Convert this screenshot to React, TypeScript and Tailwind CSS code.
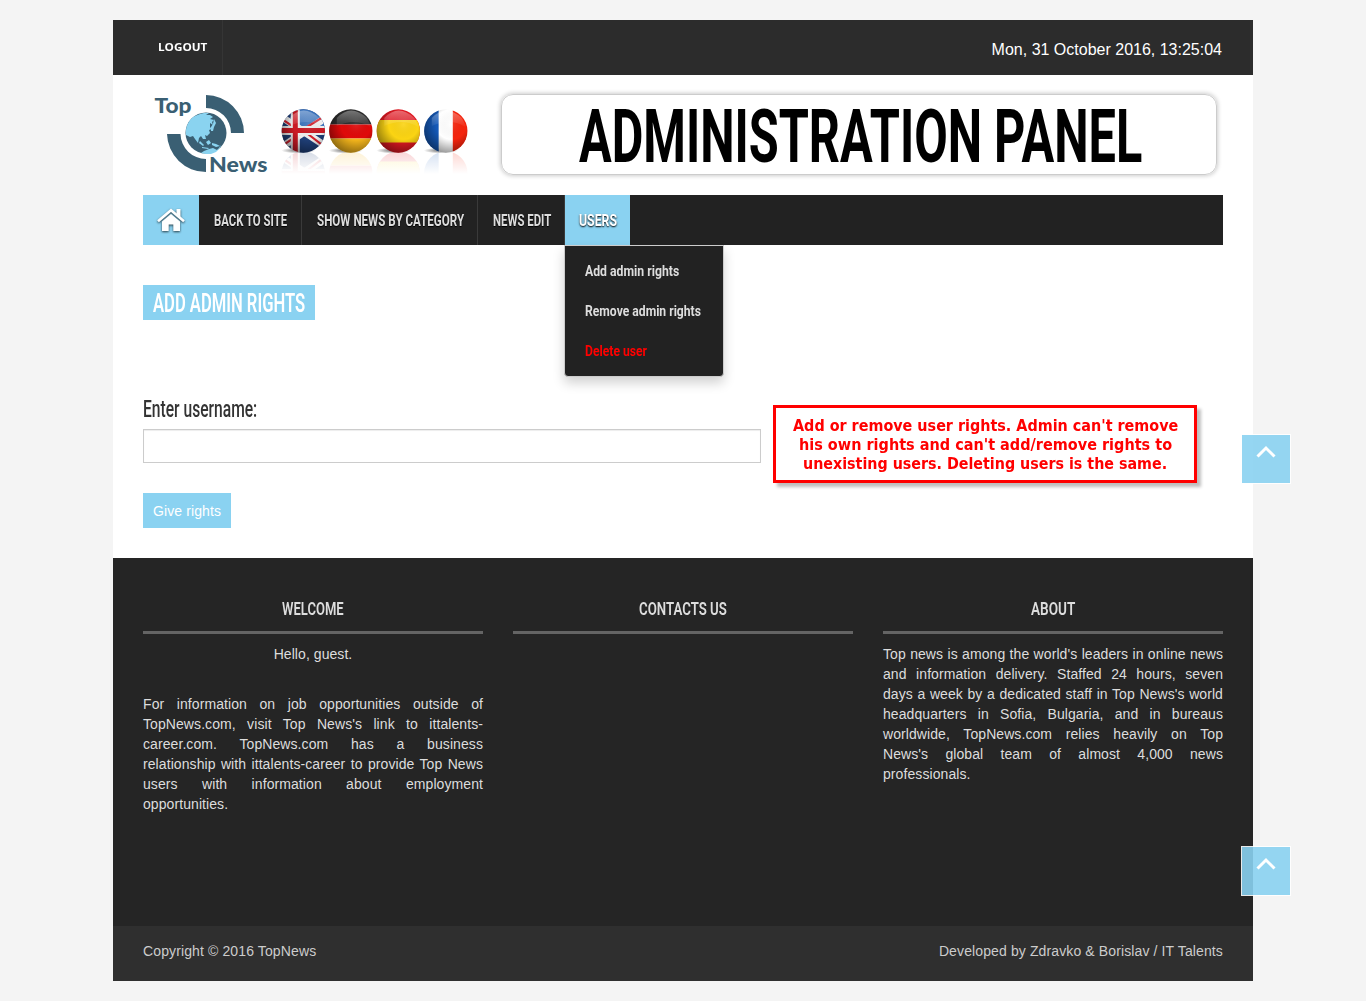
import { useLayoutEffect, useRef, useState } from 'react';
import type { ReactNode } from 'react';

/* Squeezes a line of text horizontally so that it fills its box. */
function Fit({ text, box, className }: { text: string; box: string; className: string }) {
  const outer = useRef<HTMLSpanElement>(null);
  const inner = useRef<HTMLSpanElement>(null);
  const [scale, setScale] = useState(1);
  useLayoutEffect(() => {
    if (outer.current && inner.current) {
      setScale(outer.current.offsetWidth / inner.current.offsetWidth);
    }
  }, [text]);
  return (
    <span ref={outer} className={`block overflow-visible whitespace-nowrap ${box}`}>
      <span ref={inner} className={`block w-max origin-left ${className}`} style={{ transform: `scaleX(${scale})` }}>
        {text}
      </span>
    </span>
  );
}

function Logo() {
  return (
    <svg width="140" height="100" viewBox="0 0 140 100" className="block shrink-0">
      <g fill="#3a5f73">
        <path d="M66 10 A38 38 0 0 1 104 48 L91 48 A25 25 0 0 0 66 23 Z" />
        <path d="M66 87 A39 39 0 0 1 27 49 L40.500 49 A25.500 25.500 0 0 0 66 74 Z" />
        <circle cx="66" cy="48" r="20.500" />
      </g>
      <g fill="#8ad3f0">
        <path d="M46 50 C45 42 49 34 55 31 L60 29 L64 28 L69 28 L66 30 L70 30 L73 32 L70 34 L74 35 L72 37 L73 40 L70 38 L70 42 L72 44 L69 45 L70 48 L67 51 L65 50 L66 54 L63 54 L61 51 L59 53 L58 58 L55 54 L53 51 L50 52 Z" />
        <path d="M71 42 L73 39 L74 34 L76 38 L74 42 L73 46 L71 46 Z M60 56 L64 60 L63 61 L59 58 Z M66 57 L69 55 L71 58 L68 60 Z M72 58 L76 59 L80 61 L76 62 L72 60 Z M62 62 L69 63 L68 64 L62 63 Z M64 66 L69 64 L73 63 L77 65 L79 63 L81 60 L80 63 L76 67 L71 69 L66 69 L61 68 Z" />
      </g>
      <g fill="#3a5f73" fontFamily="Lato" fontWeight="900" fontSize="20">
        <text x="14.500" y="28" textLength="37" lengthAdjust="spacingAndGlyphs">Top</text>
        <text x="69" y="86.500" textLength="58.500" lengthAdjust="spacingAndGlyphs">News</text>
      </g>
    </svg>
  );
}

function FlagArt({ kind }: { kind: string }) {
  if (kind === 'uk')
    return (
      <g>
        <rect width="44" height="44" fill="#1f3f78" />
        <rect x="14" width="30" height="20" fill="#3c74bd" />
        <path d="M-4 5 L50 41 M-4 41 L50 5" stroke="#eee" strokeWidth="7" />
        <path d="M-4 7 L20 23 M24 23 L50 43 M-4 40 L20 24 M24 19 L48 4" stroke="#d2202c" strokeWidth="2.200" />
        <path d="M14 0 V44 M0 21.500 H44" stroke="#eee" strokeWidth="9" />
        <path d="M14 0 V44 M0 21.500 H44" stroke="#cb1a24" strokeWidth="5" />
      </g>
    );
  if (kind === 'de')
    return (
      <g>
        <rect width="44" height="15.500" fill="#2c2c2c" />
        <rect y="15.500" width="44" height="14" fill="#e00a0a" />
        <rect y="29.500" width="44" height="15" fill="#f6b71c" />
      </g>
    );
  if (kind === 'es')
    return (
      <g>
        <rect width="44" height="44" fill="#e01822" />
        <rect y="11" width="44" height="22.500" fill="#fbd413" />
      </g>
    );
  return (
    <g>
      <rect width="15" height="44" fill="#1559b8" />
      <rect x="15" width="14" height="44" fill="#fff" />
      <rect x="29" width="15" height="44" fill="#f5240d" />
    </g>
  );
}

const flags = ['uk', 'de', 'es', 'fr'];

function Flags() {
  return (
    <svg width="210" height="90" viewBox="0 0 210 90" className="block shrink-0">
      <defs>
        <radialGradient id="shade" cx="0.62" cy="0.35" r="0.75">
          <stop offset="0" stopColor="#fff" stopOpacity="0.1" />
          <stop offset="0.45" stopColor="#000" stopOpacity="0" />
          <stop offset="1" stopColor="#000" stopOpacity="0.5" />
        </radialGradient>
        <linearGradient id="gloss" x1="0" y1="0" x2="0" y2="1">
          <stop offset="0" stopColor="#fff" stopOpacity="0.35" />
          <stop offset="1" stopColor="#fff" stopOpacity="0.04" />
        </linearGradient>
        <linearGradient id="fade" x1="0" y1="57" x2="0" y2="79" gradientUnits="userSpaceOnUse">
          <stop offset="0" stopColor="#fff" stopOpacity="0.82" />
          <stop offset="1" stopColor="#fff" />
        </linearGradient>
        <radialGradient id="ground">
          <stop offset="0" stopColor="#000" stopOpacity="0.6" />
          <stop offset="1" stopColor="#000" stopOpacity="0" />
        </radialGradient>
        <clipPath id="ball"><circle cx="22" cy="22" r="21.700" /></clipPath>
      </defs>
      {flags.map((k, i) => (
        <g key={k} transform={`translate(${11.3 + i * 47.5} 14)`}>
          <g transform="translate(0 86) scale(1 -1)"><g clipPath="url(#ball)"><FlagArt kind={k} /></g></g>
        </g>
      ))}
      <rect y="57" width="210" height="33" fill="url(#fade)" />
      {flags.map((k, i) => (
        <g key={k} transform={`translate(${11.3 + i * 47.5} 14)`}>
          <ellipse cx="17" cy="41.500" rx="17" ry="3" fill="url(#ground)" />
          <g clipPath="url(#ball)">
            <FlagArt kind={k} />
            <circle cx="22" cy="22" r="22" fill="url(#shade)" />
            <path d="M8 9 Q22 -6 38 9 Q44 20 40 17 Q26 9 8 17 Z" fill="url(#gloss)" />
          </g>
        </g>
      ))}
    </svg>
  );
}

function HomeIcon() {
  return (
    <svg width="28" height="24" viewBox="0 0 28 24" className="drop-shadow-[0_1px_1px_rgba(0,0,0,0.7)]">
      <path d="M1 13.200 L14 2.200 L27 13.200" fill="none" stroke="#fff" strokeWidth="2.600" />
      <path d="M19.500 1 H23.500 V9 L19.500 6 Z M14 6 L23 13.500 V23 H16.300 V16.500 H11.700 V23 H5 V13.500 Z" fill="#fff" />
    </svg>
  );
}

const navItem = 'flex h-[50px] items-center border-r border-[#3a3a3a] pl-[15px] pt-px';
const navText = "font-['Roboto'] text-[16.500px] font-bold leading-[20px] text-[#ddd] [text-shadow:0_1px_1px_#000]";
const dropText = "font-['Roboto'] text-[15.500px] font-bold leading-[20px]";
const noteText = "font-['DejaVu_Sans'] text-[16px] font-bold leading-[19px] text-[#f00]";
const headText = "font-['Roboto'] text-[18.500px] font-semibold leading-[20px] text-[#ddd]";

function UpButton({ place }: { place: string }) {
  return (
    <div className={`absolute left-[1241px] flex h-[50px] w-[50px] justify-center border border-white/90 bg-[#8ad2f1]/90 bg-clip-padding pt-[10px] ${place}`}>
      <svg width="20" height="14" viewBox="0 0 20 14">
        <path d="M1.500 11.500 L10 3 L18.500 11.500" fill="none" stroke="#fff" strokeWidth="3" />
      </svg>
    </div>
  );
}

/* Justified paragraph with fixed line breaks; the last line stays ragged. */
function Lines({ lines, className }: { lines: string[]; className: string }) {
  return (
    <p className={className}>
      {lines.map((line, i) => (
        <span key={line} className={i < lines.length - 1 ? 'block whitespace-nowrap [text-align-last:justify]' : 'block'}>
          {line}
        </span>
      ))}
    </p>
  );
}

function FooterColumn({ title, box, children }: { title: string; box: string; children?: ReactNode }) {
  return (
    <section className="w-[340px]">
      <div className="flex h-[36px] justify-center border-b-[3px] border-[#646464] pt-px">
        <Fit text={title} box={box} className={headText} />
      </div>
      {children}
    </section>
  );
}

export default function App() {
  return (
    <div className="relative h-[1001px] w-[1366px] overflow-hidden bg-[#f4f4f4] pt-5 font-['Liberation_Sans',sans-serif] text-[14px] leading-[20px]">
      <div className="mx-auto flex h-[961px] w-[1140px] flex-col bg-white">
        <header className="flex h-[55px] shrink-0 justify-between bg-[#2c2c2c] pr-[31px]">
          <div className="w-[110px] border-r border-[#353535] pl-[45px] pt-[17px]">
            <Fit text="LOGOUT" box="w-[49px]" className="font-['Open_Sans'] text-[11px] font-bold leading-[20px] text-white" />
          </div>
          <span className="pt-[20px] text-[16px] text-white">Mon, 31 October 2016, 13:25:04</span>
        </header>

        <div className="flex h-[120px] shrink-0 pl-[27px] pt-[10px]">
          <Logo />
          <div className="-ml-[10px] pt-[10px]"><Flags /></div>
          <div className="ml-[21px] mt-[9px] flex h-[81px] w-[716px] justify-center rounded-[12px] border border-[#ccc] pl-[2px] pt-[5px] shadow-[0_0_4px_1px_rgba(0,0,0,0.2)]">
            <Fit text="ADMINISTRATION PANEL" box="w-[563px]" className="font-['Roboto'] text-[74.500px] font-bold leading-[74px] text-black" />
          </div>
        </div>

        <nav className="mx-[30px] flex h-[50px] shrink-0 bg-[#222]">
          <div className="flex w-[56px] items-center justify-center bg-[#8ad2f1] pb-px"><HomeIcon /></div>
          <div className={`w-[103px] ${navItem}`}><Fit text="BACK TO SITE" box="w-[73px]" className={navText} /></div>
          <div className={`w-[176px] ${navItem}`}><Fit text="SHOW NEWS BY CATEGORY" box="w-[147px]" className={navText} /></div>
          <div className={`w-[87px] ${navItem}`}><Fit text="NEWS EDIT" box="w-[58px]" className={navText} /></div>
          <div className="relative flex w-[65px] items-center bg-[#8ad2f1] pl-[14px] pt-px">
            <Fit text="USERS" box="w-[38px]" className="font-['Roboto'] text-[16.500px] font-bold leading-[20px] text-white [text-shadow:0_1px_2px_#000]" />
            <div className="absolute -left-px top-[50px] flex h-[132px] w-[160px] flex-col gap-5 rounded-b-[4px] border border-[#ccc] bg-[#222] pl-5 pt-[15px] shadow-[0_6px_12px_rgba(0,0,0,0.18)]">
              <Fit text="Add admin rights" box="w-[94px]" className={`${dropText} text-[#ddd]`} />
              <Fit text="Remove admin rights" box="w-[116px]" className={`${dropText} text-[#ddd]`} />
              <Fit text="Delete user" box="w-[62px]" className={`${dropText} text-[#f00]`} />
            </div>
          </div>
        </nav>

        <main className="flex h-[313px] shrink-0 flex-col items-start px-[30px] pt-[40px]">
          <h1 className="flex h-[35px] w-[172px] items-center bg-[#8ad2f1] pl-[10px] pt-[2px]">
            <Fit text="ADD ADMIN RIGHTS" box="w-[152px]" className="font-['Roboto'] text-[25px] font-semibold leading-[30px] text-white" />
          </h1>
          <label className="mt-[75px] h-[34px]">
            <Fit text="Enter username:" box="w-[114px]" className="font-['Roboto'] text-[23px] font-medium leading-[30px] text-[#333]" />
          </label>
          <input className="block h-[34px] w-[618px] border border-[#ccc] bg-white shadow-[inset_0_1px_1px_rgba(0,0,0,0.075)]" />
          <button className="mt-[30px] h-[35px] w-[88px] whitespace-nowrap bg-[#8ad2f1] text-[14px] tracking-[0.1px] text-white">Give rights</button>
        </main>

        <footer className="flex h-[423px] shrink-0 flex-col bg-[#252525] text-[#ddd]">
          <div className="flex h-[368px] gap-[30px] px-[30px] pt-[40px]">
            <FooterColumn title="WELCOME" box="w-[62px]">
              <p className="mt-[10px] text-center tracking-[0.06px]">Hello, guest.</p>
              <Lines
                className="mt-[30px] tracking-[0.08px]"
                lines={[
                  'For information on job opportunities outside of',
                  "TopNews.com, visit Top News's link to ittalents-",
                  'career.com. TopNews.com has a business',
                  'relationship with ittalents-career to provide Top News',
                  'users with information about employment',
                  'opportunities.',
                ]}
              />
            </FooterColumn>
            <FooterColumn title="CONTACTS US" box="w-[88px]" />
            <FooterColumn title="ABOUT" box="w-[44px]">
              <Lines
                className="mt-[10px] tracking-[0.08px]"
                lines={[
                  "Top news is among the world's leaders in online news",
                  'and information delivery. Staffed 24 hours, seven',
                  "days a week by a dedicated staff in Top News's world",
                  'headquarters in Sofia, Bulgaria, and in bureaus',
                  'worldwide, TopNews.com relies heavily on Top',
                  "News's global team of almost 4,000 news",
                  'professionals.',
                ]}
              />
            </FooterColumn>
          </div>
          <div className="flex h-[55px] justify-between bg-[#2f2f2f] px-[30px] pt-[15px] tracking-[0.12px] text-[#ccc]">
            <span>Copyright © 2016 TopNews</span>
            <span>Developed by Zdravko &amp; Borislav / IT Talents</span>
          </div>
        </footer>
      </div>

      <div className="absolute left-[773px] top-[405px] flex h-[78px] w-[424px] flex-col items-center border-[3px] border-[#f00] bg-white pt-[8px] shadow-[4px_4px_3px_rgba(0,0,0,0.25)]">
        <Fit text="Add or remove user rights. Admin can't remove" box="w-[385px]" className={noteText} />
        <Fit text="his own rights and can't add/remove rights to" box="w-[373px]" className={noteText} />
        <Fit text="unexisting users. Deleting users is the same." box="w-[364px]" className={noteText} />
      </div>
      <UpButton place="top-[434px]" />
      <UpButton place="top-[846px]" />
    </div>
  );
}
